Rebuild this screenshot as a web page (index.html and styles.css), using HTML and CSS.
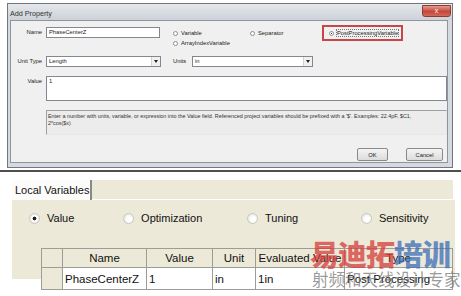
FILE: index.html
```html
<!DOCTYPE html>
<html lang="en">
<head>
    <meta charset="UTF-8">
    <title>Add Property</title>
    <link rel="stylesheet" href="styles.css">
</head>
<body>

    <div class="dialog">
        <div class="titlebar">
            <span class="title">Add Property</span>
            <span class="close">x</span>
        </div>
        <div class="client">
            <div class="row row-name">
                <label class="lbl">Name</label>
                <div class="field name-field">PhaseCenterZ</div>
                <div class="radio-col">
                    <span class="radio"><i></i>Variable</span>
                    <span class="radio"><i></i>ArrayIndexVariable</span>
                </div>
                <div class="sep-col">
                    <span class="radio"><i></i>Separator</span>
                </div>
                <div class="pp-box">
                    <span class="radio checked"><i></i><em>PostProcessingVariable</em></span>
                </div>
            </div>

            <div class="row row-unit">
                <label class="lbl">Unit Type</label>
                <div class="field select unit-type">Length<b></b></div>
                <label class="lbl-units">Units</label>
                <div class="field select units">in<b></b></div>
            </div>

            <div class="row row-value">
                <label class="lbl">Value</label>
                <div class="field value-field">1</div>
            </div>

            <div class="row row-help">
                <div class="help">Enter a number with units, variable, or expression into the Value field. Referenced project variables should be prefixed with a '$'. Examples: 22.4pF, $C1,<br>2*cos($x)</div>
            </div>

            <div class="row row-btns">
                <button class="btn ok-btn">OK</button>
                <button class="btn cancel-btn">Cancel</button>
            </div>
        </div>
    </div>

    <div class="vars">
        <div class="tabs">
            <span class="tab">Local Variables</span>
            <span class="tab-rest"></span>
        </div>
        <div class="panel">
            <div class="modes">
                <span class="opt checked"><i></i>Value</span>
                <span class="opt opt-optim"><i></i>Optimization</span>
                <span class="opt opt-tune"><i></i>Tuning</span>
                <span class="opt"><i></i>Sensitivity</span>
            </div>
            <table class="grid">
                <tr>
                    <th class="corner"></th>
                    <th class="c-name">Name</th>
                    <th class="c-value">Value</th>
                    <th class="c-unit">Unit</th>
                    <th class="c-eval">Evaluated Value</th>
                    <th class="c-type">Type</th>
                </tr>
                <tr class="data">
                    <td class="corner"></td>
                    <td>PhaseCenterZ</td>
                    <td>1</td>
                    <td>in</td>
                    <td>1in</td>
                    <td>Post Processing</td>
                </tr>
            </table>
        </div>
    </div>

    <!-- watermark over the lower screenshot -->
    <div class="mark">
        <div class="mark-big"><span class="red">易迪拓</span><span class="blue">培训</span></div>
        <div class="mark-small">射频和天线设计专家</div>
    </div>

</body>
</html>
```
FILE: styles.css
```css
body {
    margin: 0;
    width: 461px;
    height: 296px;
    overflow: hidden;
    position: relative;
    background: #fff;
    font-family: "Liberation Sans", Arial, sans-serif;
    color: #222;
}
.dialog {
    margin: 3px 0 0 7px;
    width: 446px;
    height: 165px;
    box-sizing: border-box;
    background: #d5dae0;
    border: 1px solid #70777f;
    display: flex;
    flex-direction: column;
}
.titlebar {
    height: 16px;
    display: flex;
    align-items: flex-start;
    justify-content: space-between;
    background: linear-gradient(#e4e7eb, #ccd2d9);
}
.title {
    font-size: 7.2px;
    margin: 5px 0 0 2px;
    color: #333;
}
.close {
    width: 27px;
    height: 10px;
    margin: 1px 1px 0 0;
    background: linear-gradient(#e89a8e, #c4483a 55%, #d26a5c);
    border: 1px solid #8e3b33;
    border-radius: 0 0 3px 3px;
    color: #fff;
    font-size: 7px;
    line-height: 9px;
    text-align: center;
}
.client {
    flex: 1;
    margin: 0 4px 4px 2px;
    background: #f0f0f0;
    border: 1px solid #8e959d;
    font-size: 5.8px;
}
.row {
    display: flex;
    align-items: flex-start;
}
.lbl {
    width: 31px;
    margin-right: 4px;
    text-align: right;
    line-height: 11px;
}
.field {
    height: 11px;
    box-sizing: border-box;
    border: 1px solid #828790;
    background: #fff;
    line-height: 9px;
    padding-left: 2px;
    position: relative;
}
.row-name {
    margin-top: 6px;
    height: 22px;
}
.name-field {
    width: 114px;
}
.radio-col {
    margin-left: 13px;
    width: 77px;
    padding-top: 1px;
    display: flex;
    flex-direction: column;
}
.sep-col {
    width: 72px;
    padding-top: 1px;
}
.radio {
    display: flex;
    align-items: center;
    height: 10px;
    white-space: nowrap;
}
.radio i {
    width: 5px;
    height: 5px;
    border: 1px solid #8f8f8f;
    border-radius: 50%;
    background: #fff;
    margin-right: 3px;
    box-sizing: border-box;
}
.radio.checked i {
    background: radial-gradient(#333 35%, #fff 45%);
}
.radio em {
    font-style: normal;
    outline: 1px dotted #777;
    outline-offset: 0;
}
.pp-box {
    width: 81px;
    height: 16px;
    margin-top: -2px;
    box-sizing: border-box;
    border: 2px solid #c8464a;
    padding: 1px 0 0 5px;
}
.row-unit {
    margin-top: 7px;
}
.select b {
    position: absolute;
    right: 0;
    top: 0;
    width: 8px;
    height: 9px;
    background: #f0f0f0;
    border-left: 1px solid #d0d0d0;
}
.select b::after {
    content: "";
    position: absolute;
    left: 2px;
    top: 3px;
    border: 2px solid transparent;
    border-top: 3px solid #222;
}
.unit-type {
    width: 115px;
}
.lbl-units {
    margin-left: 12px;
    width: 15px;
    margin-right: 4px;
    line-height: 11px;
}
.units {
    width: 121px;
}
.row-value {
    margin-top: 9px;
}
.value-field {
    width: 401px;
    height: 25px;
}
.row-help {
    margin-top: 9px;
    padding-left: 35px;
}
.help {
    width: 401px;
    height: 25px;
    box-sizing: border-box;
    border: 1px solid #e6e6e6;
    border-top-color: #a0a0a0;
    border-left-color: #a0a0a0;
    background: #ececec;
    font-size: 5.4px;
    line-height: 6.5px;
    padding: 2px 0 0 1px;
    color: #333;
}
.row-btns {
    margin-top: 13px;
    justify-content: flex-end;
    padding-right: 4px;
    gap: 18px;
}
.btn {
    height: 13px;
    padding: 0;
    font-family: inherit;
    font-size: 5.8px;
    color: #222;
    background: linear-gradient(#f4f4f4, #dcdcdc);
    border: 1px solid #8a8a8a;
    border-radius: 2px;
}
.ok-btn {
    width: 31px;
}
.cancel-btn {
    width: 37px;
}

/* lower screenshot: local variables */
.vars {
    margin-top: 2px;
    border-top: 2px solid #4f4f4f;
    padding-top: 8px;
    font-size: 11px;
    color: #111;
}
.tabs {
    display: flex;
    height: 20px;
    padding-left: 12px;
}
.tab {
    width: 80px;
    box-sizing: border-box;
    background: #fcfcfb;
    border-right: 2px solid #8a8a84;
    padding: 4px 0 0 3px;
    white-space: nowrap;
}
.tab-rest {
    width: 361px;
    background: #ece9d8;
    border-bottom: 1px solid #fff;
}
.panel {
    margin-left: 12px;
    width: 443px;
    height: 79px;
    background: #ece9d8;
}
.modes {
    display: flex;
    align-items: center;
    height: 36px;
    padding-left: 17px;
}
.opt {
    display: flex;
    align-items: center;
    width: 95px;
}
.opt-optim {
    width: 125px;
}
.opt-tune {
    width: 115px;
}
.opt i {
    width: 11px;
    height: 11px;
    box-sizing: border-box;
    border-radius: 50%;
    border: 1px solid #c8c8c0;
    background: radial-gradient(circle at 60% 60%, #fff 30%, #dcdcd4);
    margin-right: 7px;
}
.opt.checked i {
    background: radial-gradient(#222 25%, #fff 35%, #e4e4dc);
}
.grid {
    margin: 12px 0 0 29px;
    border-collapse: collapse;
    font-size: 11.5px;
}
.grid th, .grid td {
    border: 1px solid #9d9d97;
    height: 18px;
    padding: 0 2px;
    white-space: nowrap;
}
.grid .data td {
    height: 21px;
}
.grid th {
    background: #ece9d8;
    font-weight: normal;
    text-align: center;
}
.grid td {
    background: #fff;
    text-align: left;
}
.grid .corner {
    width: 16px;
    background: #ece9d8;
}
.c-name { width: 79px; }
.c-value { width: 61px; }
.c-unit { width: 38px; }
.c-eval { width: 84px; }
.c-type { width: 103px; }

.mark {
    position: absolute;
    left: 310px;
    top: 237px;
    font-family: "Noto Sans CJK SC", sans-serif;
}
.mark-big {
    font-size: 29px;
    font-weight: 900;
    line-height: 32px;
    letter-spacing: -1px;
}
.red {
    color: rgba(214, 60, 60, 0.75);
}
.blue {
    color: rgba(60, 110, 185, 0.75);
}
.mark-small {
    font-size: 16.5px;
    line-height: 20px;
    color: rgba(110, 110, 110, 0.7);
    margin-left: 2px;
}
```
